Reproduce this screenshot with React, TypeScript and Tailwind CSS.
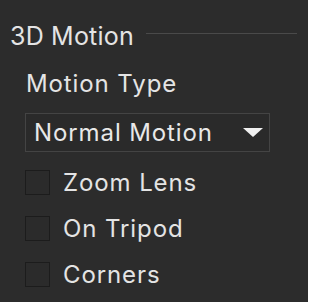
import React from "react";

function Check({ label }: { label: string }) {
  return (
    <div className="flex items-center h-[25px]">
      <div className="w-[25px] h-[25px] border border-[#1c1c1c] bg-[#2b2b2b]" />
      <span className="ml-[13px] text-[24px] leading-none tracking-[0.9px] text-[#e4e4e4]">{label}</span>
    </div>
  );
}

export default function App() {
  return (
    <div
      className="w-[308px] h-[302px] bg-[#2c2c2c] overflow-hidden"
      style={{ fontFamily: "Inter, 'Noto Sans', sans-serif" }}
    >
      <div className="flex items-start pl-[10px] pr-[11px] pt-[24px]">
        <span className="text-[25px] leading-none tracking-[0.2px] text-[#e4e4e4] whitespace-nowrap">3D Motion</span>
        <div className="flex-1 ml-[12px] mt-[9px] h-px bg-[#4a4a4a]" />
      </div>
      <div className="pl-[26px] pt-[23px] text-[24px] leading-none tracking-[0.9px] text-[#e4e4e4]">Motion Type</div>
      <div className="ml-[25px] mt-[17px] w-[245px] h-[39px] border border-[#444] bg-[#2a2a2a] flex items-center justify-between pl-[8px] pr-[6px]">
        <span className="text-[24px] leading-none tracking-[0.9px] text-[#e8e8e8]">Normal Motion</span>
        <svg width="20" height="9" viewBox="0 0 20 9">
          <polygon points="0,0 20,0 10,9" fill="#efefef" />
        </svg>
      </div>
      <div className="ml-[25px] mt-[18px] flex flex-col gap-[21px]">
        <Check label="Zoom Lens" />
        <Check label="On Tripod" />
        <Check label="Corners" />
      </div>
    </div>
  );
}
